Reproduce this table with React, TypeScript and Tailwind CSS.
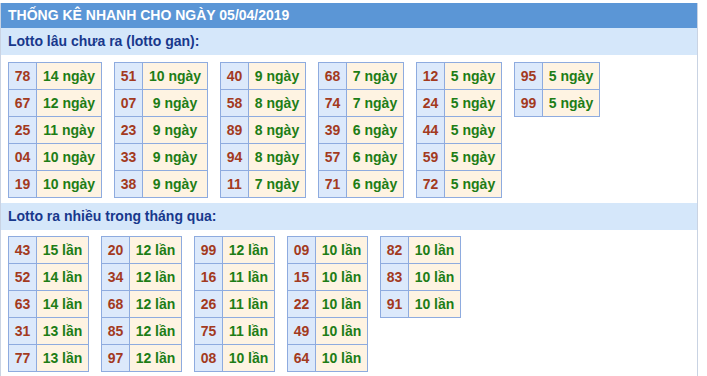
type Pair = [string, string];

// lotto gan: so / so ngay chua ra
const ganGroups: { w: string; rows: Pair[] }[] = [
  { w: "w-[65px]", rows: [["78", "14"], ["67", "12"], ["25", "11"], ["04", "10"], ["19", "10"]] },
  { w: "w-[65px]", rows: [["51", "10"], ["07", "9"], ["23", "9"], ["33", "9"], ["38", "9"]] },
  { w: "w-[57px]", rows: [["40", "9"], ["58", "8"], ["89", "8"], ["94", "8"], ["11", "7"]] },
  { w: "w-[57px]", rows: [["68", "7"], ["74", "7"], ["39", "6"], ["57", "6"], ["71", "6"]] },
  { w: "w-[57px]", rows: [["12", "5"], ["24", "5"], ["44", "5"], ["59", "5"], ["72", "5"]] },
  { w: "w-[57px]", rows: [["95", "5"], ["99", "5"]] },
];

// lotto ra nhieu trong thang
const hotGroups: { w: string; rows: Pair[] }[] = [
  { w: "w-[52px]", rows: [["43", "15"], ["52", "14"], ["63", "14"], ["31", "13"], ["77", "13"]] },
  { w: "w-[52px]", rows: [["20", "12"], ["34", "12"], ["68", "12"], ["85", "12"], ["97", "12"]] },
  { w: "w-[52px]", rows: [["99", "12"], ["16", "11"], ["26", "11"], ["75", "11"], ["08", "10"]] },
  { w: "w-[52px]", rows: [["09", "10"], ["15", "10"], ["22", "10"], ["49", "10"], ["64", "10"]] },
  { w: "w-[52px]", rows: [["82", "10"], ["83", "10"], ["91", "10"]] },
];

function StatGroup({ rows, w, unit }: { rows: Pair[]; w: string; unit: string }) {
  return (
    <div className="flex flex-col border-l border-t border-[#8eabdf]">
      {rows.map(([num, count]) => (
        <div className="flex h-[27px]" key={num}>
          <div className="flex w-[28px] items-center justify-center border-b border-r border-[#8eabdf] bg-[#dce9fb] text-[#a33a1e]">
            {num}
          </div>
          <div
            className={`flex ${w} items-center justify-center whitespace-nowrap border-b border-r border-[#8eabdf] bg-[#fef3e2] text-[#1d7d16]`}
          >
            {count} {unit}
          </div>
        </div>
      ))}
    </div>
  );
}

export default function App() {
  return (
    <div className="h-[376px] w-[707px] bg-white pt-[3px] font-['Liberation_Sans',Arial,sans-serif] text-[14px] font-bold">
      <div className="h-[373px] w-[698px] border-x border-[#c9d3e3]">

        {/* HEADER ------------------------------------------------------*/}

        <div className="flex h-[25px] items-center bg-[#5b96d6] pl-[7px] text-white">
          THỐNG KÊ NHANH CHO NGÀY 05/04/2019
        </div>

        {/* LOTTO GAN ------------------------------------------------------*/}

        <div className="flex h-[27px] items-center bg-[#d5e7fa] pl-[7px] text-[#18388c]">
          Lotto lâu chưa ra (lotto gan):
        </div>

        <div className="flex items-start gap-3 pb-[5px] pl-[7px] pt-[7px]">
          {ganGroups.map((g, i) => (
            <StatGroup key={i} rows={g.rows} w={g.w} unit="ngày" />
          ))}
        </div>

        {/* LOTTO RA NHIEU ------------------------------------------------------*/}

        <div className="flex h-[27px] items-center bg-[#d5e7fa] pl-[7px] text-[#18388c]">
          Lotto ra nhiều trong tháng qua:
        </div>

        <div className="flex items-start gap-3 pl-[7px] pt-[6px]">
          {hotGroups.map((g, i) => (
            <StatGroup key={i} rows={g.rows} w={g.w} unit="lần" />
          ))}
        </div>
      </div>
    </div>
  );
}
